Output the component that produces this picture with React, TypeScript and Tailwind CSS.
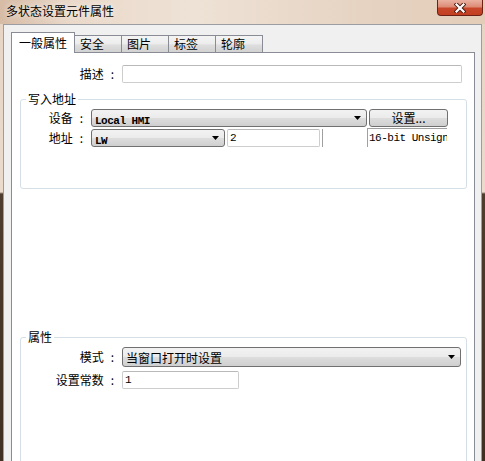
import React from "react";

const cjk = "font-['Noto_Sans_CJK_SC','Noto_Sans',sans-serif] text-[12px] leading-[14px] text-black";
const mono = "font-['Liberation_Mono',monospace] text-[11px] tracking-[-0.5px] leading-[14px] text-black";
const btnBg = "bg-[linear-gradient(to_bottom,#f2f2f2_0%,#ebebeb_50%,#dddddd_51%,#cfcfcf_100%)]";

function Arrow() {
  return (
    <svg width="7" height="4" viewBox="0 0 7 4" className="shrink-0">
      <path d="M0 0H7L3.5 4Z" fill="#000" />
    </svg>
  );
}

function Combo({ width, height, children }: { width: string; height: string; children: React.ReactNode }) {
  return (
    <div className={`flex items-center ${width} ${height} pl-[3px] pr-[5px] border border-[#707070] rounded-[3px] ${btnBg}`}>
      <div className="flex-1 min-w-0 overflow-hidden whitespace-nowrap">{children}</div>
      <Arrow />
    </div>
  );
}

function Label({ width, text }: { width: string; text: string }) {
  return (
    <div className={`flex justify-end items-center shrink-0 ${width} pr-[8px] ${cjk}`}>
      <span>{text}</span>
      <span className="ml-[7px]">:</span>
    </div>
  );
}

function TextBox({ width, value }: { width: string; value?: string }) {
  return (
    <div className={`flex items-center ${width} h-[18px] pl-[2px] bg-white border border-[#cdcdcd] border-t-[#b9b9b9] rounded-[2px] ${mono}`}>
      {value}
    </div>
  );
}

function Tab({ label }: { label: string }) {
  return (
    <div className={`w-[47px] h-[17px] pl-[5px] flex items-center border-t border-r border-[#898c95] bg-[linear-gradient(to_bottom,#f4f4f4_0%,#ececec_50%,#dedede_55%,#d2d2d2_100%)] ${cjk}`}>
      {label}
    </div>
  );
}

export default function App() {
  return (
    <div className="w-[485px] h-[461px] overflow-hidden flex flex-col bg-[linear-gradient(to_bottom,#e7d4c3_0px,#eadbcd_192px,#4f3d2d_194px,#3f3023_461px)]">
      {/* title bar */}
      <div className="h-[24px] shrink-0 flex justify-between bg-[linear-gradient(to_right,#d6bba5_0%,#ead9ca_15%,#eee2d6_40%,#e6d3c2_75%,#e3cdb9_100%)]">
        <div className={`mt-[4px] pl-[6px] ${cjk} [text-shadow:0_0_6px_#fff]`}>多状态设置元件属性</div>
        <div className="w-[46px] h-[16px] mr-[2px] flex items-center justify-center rounded-b-[4px] border border-t-0 border-[#6d2015] bg-[linear-gradient(to_bottom,#eab1a2_0%,#dd8c76_45%,#c8462a_55%,#c33f22_100%)]">
          <svg width="12" height="10" viewBox="0 0 12 10">
            <path d="M2.5 1.5L9.5 8.5M9.5 1.5L2.5 8.5" stroke="#4a1a10" strokeWidth="4" strokeLinecap="square" />
            <path d="M2.5 1.5L9.5 8.5M9.5 1.5L2.5 8.5" stroke="#ffffff" strokeWidth="2.2" strokeLinecap="square" />
          </svg>
        </div>
      </div>

      {/* dialog body */}
      <div className="ml-[3px] w-[479px] h-[460px] shrink-0 border border-[#9a9da2] bg-[#f0f0f0] pt-[7px] pl-[7px] pr-[6px] flex flex-col">
        {/* tabs */}
        <div className="flex items-end h-[20px] shrink-0">
          <div className={`relative z-10 w-[64px] h-[21px] -mb-px flex items-center justify-center bg-white border border-b-0 border-[#898c95] ${cjk}`}>
            一般属性
          </div>
          <Tab label="安全" />
          <Tab label="图片" />
          <Tab label="标签" />
          <Tab label="轮廓" />
        </div>

        {/* panel */}
        <div className="w-[464px] h-[420px] shrink-0 bg-white border border-[#898c95] flex flex-col">
          <div className="flex items-center mt-[12px]">
            <Label width="w-[110px]" text="描述" />
            <TextBox width="w-[340px]" />
          </div>

          <fieldset className="ml-[8px] mt-[9px] w-[447px] border border-[#d5dfe5] rounded-[3px] pt-[3px] pb-[41px]">
            <legend className={`ml-[5px] px-[2px] ${cjk}`}>写入地址</legend>
            <div className="flex items-center h-[18px]">
              <Label width="w-[70px]" text="设备" />
              <Combo width="w-[276px]" height="h-[18px]">
                <span className={`${mono} font-bold`}>Local HMI</span>
              </Combo>
              <div className={`ml-[2px] w-[79px] h-[18px] flex items-center justify-center border border-[#707070] rounded-[3px] ${btnBg} ${cjk}`}>
                设置...
              </div>
            </div>
            <div className="flex items-center h-[18px] mt-[2px]">
              <Label width="w-[70px]" text="地址" />
              <Combo width="w-[134px]" height="h-[18px]">
                <span className={`${mono} font-bold`}>LW</span>
              </Combo>
              <div className="ml-[2px]">
                <TextBox width="w-[93px]" value="2" />
              </div>
              <div className="ml-[2px] w-[45px] h-[18px] border-l border-[#a0a0a0]" />
              <div className={`w-[80px] h-[19px] -mt-px pl-[1px] flex items-center border-l border-t border-[#a0a0a0] whitespace-nowrap overflow-hidden ${mono}`}>
                16-bit Unsign
              </div>
            </div>
          </fieldset>

          <fieldset className="ml-[8px] mt-[141px] w-[447px] border border-[#d5dfe5] rounded-[3px] pt-[3px] pb-[120px]">
            <legend className={`ml-[5px] px-[2px] ${cjk}`}>属性</legend>
            <div className="flex items-center h-[20px]">
              <Label width="w-[101px]" text="模式" />
              <Combo width="w-[339px]" height="h-[20px]">
                <span className={cjk}>当窗口打开时设置</span>
              </Combo>
            </div>
            <div className="flex items-center h-[18px] mt-[4px]">
              <Label width="w-[101px]" text="设置常数" />
              <TextBox width="w-[117px]" value="1" />
            </div>
          </fieldset>
        </div>
      </div>
    </div>
  );
}
